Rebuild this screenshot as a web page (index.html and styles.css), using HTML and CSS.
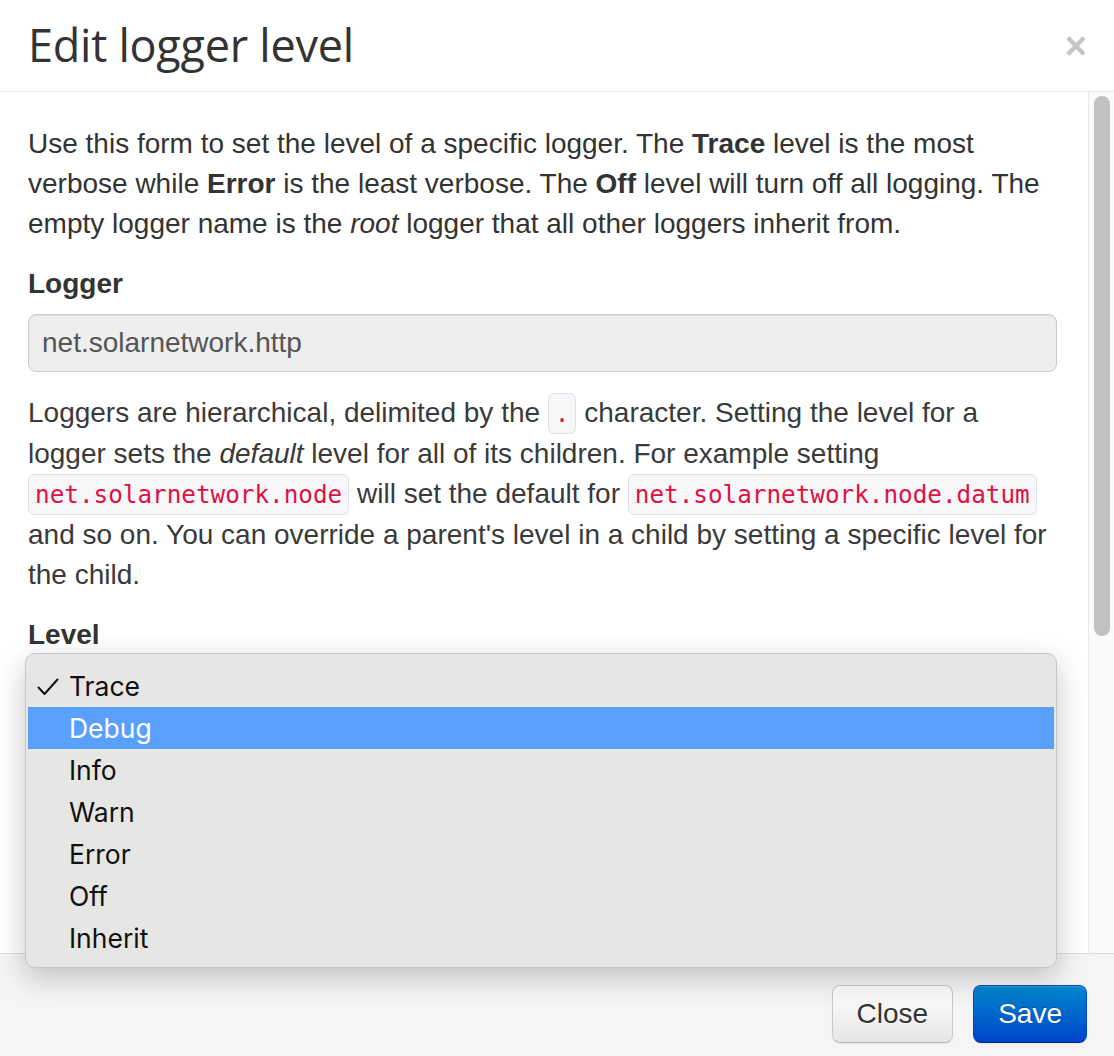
FILE: index.html
```html
<!DOCTYPE html>
<html>
<head>
<meta charset="utf-8">
<link rel="stylesheet" href="styles.css">
</head>
<body>
<div class="modal">
  <div class="modal-header">
    <h3 class="title">Edit logger level</h3>
    <span class="close">&times;</span>
  </div>
  <div class="modal-body">
    <div class="content">
      <p>Use this form to set the level of a specific logger. The <b>Trace</b> level is the most verbose while <b>Error</b> is the least verbose. The <b>Off</b> level will turn off all logging. The empty logger name is the <i>root</i> logger that all other loggers inherit from.</p>
      <label class="label">Logger</label>
      <div class="input">net.solarnetwork.http</div>
      <p class="help">Loggers are hierarchical, delimited by the <code>.</code> character. Setting the level for a logger sets the <i>default</i> level for all of its children. For example setting <code>net.solarnetwork.node</code> will set the default for <code>net.solarnetwork.node.datum</code> and so on. You can override a parent's level in a child by setting a specific level for the child.</p>
      <label class="label">Level</label>
      <div class="select">Trace</div>
    </div>
    <div class="scrollbar"><div class="thumb"></div></div>
  </div>
  <div class="modal-footer">
    <button class="btn">Close</button>
    <button class="btn btn-primary">Save</button>
  </div>
  <ul class="dropdown">
    <li class="opt checked"><svg class="check" width="22" height="18" viewBox="0 0 22 18"><polyline points="1.5,9.5 7.5,16 20.5,1.5" fill="none" stroke="#111" stroke-width="2" stroke-linecap="round" stroke-linejoin="round"/></svg>Trace</li>
    <li class="opt active">Debug</li>
    <li class="opt">Info</li>
    <li class="opt">Warn</li>
    <li class="opt">Error</li>
    <li class="opt">Off</li>
    <li class="opt">Inherit</li>
  </ul>
</div>
</body>
</html>
```

FILE: styles.css
```css
html, body {
  margin: 0;
  padding: 0;
  background: #ffffff;
}
body {
  width: 1114px;
  height: 1056px;
  overflow: hidden;
  font-family: "Liberation Sans", Arial, sans-serif;
  font-size: 28px;
  line-height: 40px;
  color: #333333;
}
.modal {
  position: relative;
  display: flex;
  flex-direction: column;
  width: 1114px;
  height: 1056px;
}
.modal-header {
  height: 91px;
  flex: 0 0 91px;
  border-bottom: 1px solid #e5e5e5;
  display: flex;
  align-items: center;
  justify-content: space-between;
  padding: 0 27px 0 28px;
}
.title {
  margin: 0 0 2px 0;
  font-family: "Open Sans", sans-serif;
  font-weight: 400;
  font-size: 45px;
  line-height: 50px;
  color: #333333;
  letter-spacing: -0.25px;
}
.close {
  font-family: "Liberation Sans", Arial, sans-serif;
  font-weight: 700;
  font-size: 38px;
  line-height: 40px;
  color: #c4c4c4;
}
.modal-body {
  flex: 1 1 auto;
  display: flex;
  overflow: hidden;
  min-height: 0;
}
.content {
  flex: 1 1 auto;
  padding: 32px 31px 0 28px;
  overflow: hidden;
}
p {
  margin: 0 0 20px 0;
}
.label {
  display: block;
  font-weight: 700;
  margin-bottom: 10px;
}
.input {
  height: 56px;
  border: 1px solid #cccccc;
  border-radius: 8px;
  background: #eeeeee;
  box-shadow: inset 0 1px 1px rgba(0,0,0,0.075);
  padding: 0 13px;
  display: flex;
  align-items: center;
  color: #555555;
  margin-bottom: 21px;
}
code {
  display: inline-block;
  font-family: "DejaVu Sans Mono", monospace;
  font-size: 24.3px;
  line-height: 39px;
  color: #dd1144;
  background: #f7f7f9;
  border: 1px solid #e1e1e8;
  border-radius: 6px;
  padding: 0 6px;
}
.help {
  color: #3a3a3a;
}
.select {
  height: 56px;
  border: 1px solid #cccccc;
  border-radius: 8px;
  background: #ffffff;
  padding: 0 13px;
  line-height: 56px;
}
.scrollbar {
  flex: 0 0 25px;
  width: 25px;
  border-left: 1px solid #e8e8e8;
  background: #fafafa;
  padding-top: 4px;
  display: flex;
  justify-content: center;
}
.thumb {
  width: 16px;
  height: 540px;
  border-radius: 8px;
  background: #c1c1c1;
}
.modal-footer {
  flex: 0 0 103px;
  height: 103px;
  box-sizing: border-box;
  border-top: 1px solid #dddddd;
  background: #f5f5f5;
  display: flex;
  justify-content: flex-end;
  align-items: flex-start;
  gap: 20px;
  padding: 31px 27px 0 0;
}
.btn {
  height: 58px;
  padding: 0 24px;
  font-family: "Liberation Sans", Arial, sans-serif;
  font-size: 28px;
  border-radius: 8px;
  border: 1px solid #c8c8c8;
  border-bottom-color: #b3b3b3;
  background: linear-gradient(#ffffff, #e6e6e6);
  color: #333333;
  text-shadow: 0 1px 1px rgba(255,255,255,0.75);
  box-shadow: inset 0 1px 0 rgba(255,255,255,0.2), 0 1px 2px rgba(0,0,0,0.05);
}
.btn-primary {
  padding: 0 24px;
  color: #ffffff;
  border-color: #0044cc #0044cc #002a80;
  background: linear-gradient(#0088cc, #0044cc);
  text-shadow: 0 -1px 0 rgba(0,0,0,0.25);
}
.dropdown {
  position: absolute;
  left: 25px;
  top: 653px;
  width: 1026px;
  margin: 0;
  padding: 11px 2px 8px 2px;
  list-style: none;
  background: #e6e7e5;
  border: 1px solid #c6c6c6;
  border-radius: 10px;
  box-shadow: 0 10px 30px rgba(0,0,0,0.22);
  font-family: Inter, "Noto Sans", sans-serif;
  font-size: 26.5px;
  color: #111111;
}
.opt {
  height: 42px;
  line-height: 42px;
  padding-left: 41px;
  position: relative;
}
.opt.active {
  background: #599ffe;
  color: #ffffff;
}
.check {
  position: absolute;
  left: 9px;
  top: 13px;
}
```
